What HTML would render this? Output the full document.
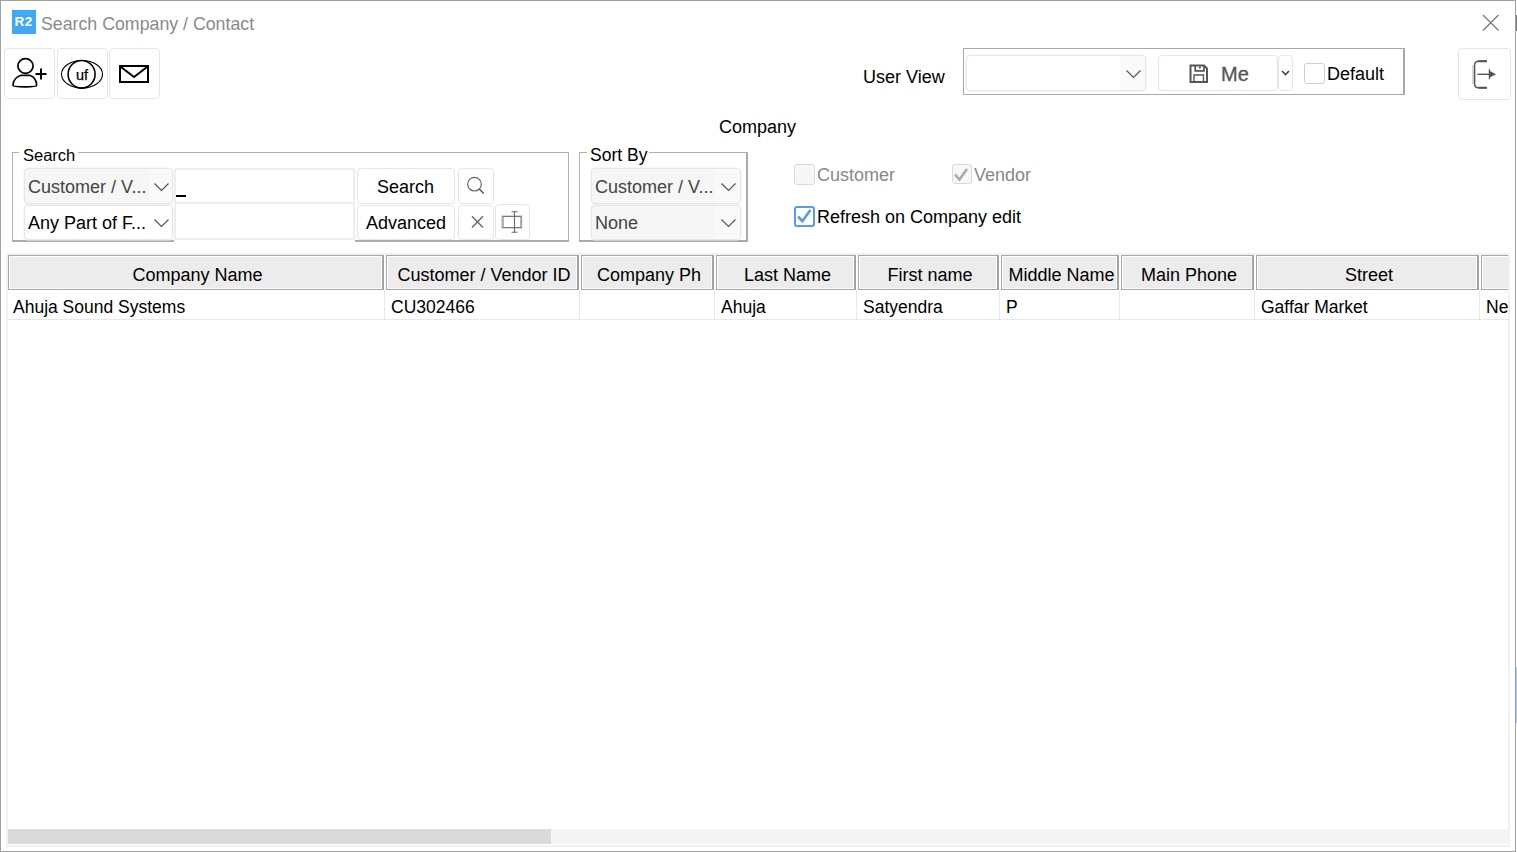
<!DOCTYPE html>
<html><head><meta charset="utf-8">
<style>
html,body{margin:0;padding:0;}
body{width:1517px;height:852px;position:relative;overflow:hidden;background:#fff;font-family:"Liberation Sans",sans-serif;color:#000;}
.a{position:absolute;box-sizing:border-box;}
.t{position:absolute;white-space:nowrap;line-height:18px;font-size:18px;}
.btn{position:absolute;box-sizing:border-box;border:1px solid #e6e6e6;border-radius:4px;background:#fff;}
.cmb{position:absolute;box-sizing:border-box;border:1px solid #e4e6e9;border-radius:4px;background:#f6f6f6;overflow:hidden;box-shadow:0 0 0 0.5px #eef0f2;}
.cmb .dd{position:absolute;top:0;bottom:0;right:0;width:23px;background:#f9f9f9;}
.hd{position:absolute;box-sizing:border-box;top:0;box-shadow:inset 1px 1px 0 #fff,inset -1px -1px 0 #fafafa;height:35px;background:#ececec;border:1px solid #a8a8a8;border-right:2px solid #a4a4a4;}
.hd span{position:absolute;left:2px;right:-2px;top:10px;text-align:center;font-size:18px;line-height:18px;white-space:nowrap;}
.rs{position:absolute;top:290px;height:30px;width:1px;background:#ececec;}
.rt{position:absolute;top:43px;font-size:17.5px;line-height:18px;white-space:nowrap;}
</style></head><body>
<!-- window frame -->
<div class="a" style="left:0;top:0;width:1516px;height:852px;border:1px solid #a0a0a0;"></div>

<div class="a" style="left:1516px;top:15px;width:1px;height:16px;background:#777;"></div>
<div class="a" style="left:1516px;top:667px;width:1px;height:56px;background:#a8c4ea;"></div>
<!-- title -->
<div class="a" style="left:12px;top:10px;width:24px;height:24px;background:#3fa9f5;"></div>
<div class="t" style="left:14.5px;top:15.3px;font-size:13.5px;line-height:13.5px;color:#fff;font-weight:bold;letter-spacing:0.6px;">R2</div>
<div class="t" style="left:41px;top:15px;font-size:17.75px;color:#8a8a8a;">Search Company / Contact</div>


<!-- close X -->
<svg class="a" style="left:1480px;top:12px" width="22" height="22" viewBox="0 0 22 22"><path d="M3 3 L18.5 18.5 M18.5 3 L3 18.5" stroke="#777" stroke-width="1.2" fill="none"/></svg>

<!-- toolbar buttons -->
<div class="btn" style="left:4px;top:48px;width:51px;height:51px;"></div>
<div class="btn" style="left:57px;top:48px;width:51px;height:51px;"></div>
<div class="btn" style="left:109px;top:48px;width:51px;height:51px;"></div>
<!-- person+ icon -->
<svg class="a" style="left:4px;top:48px" width="51" height="51" viewBox="0 0 51 51">
 <ellipse cx="21.5" cy="18" rx="7.6" ry="7.3" stroke="#000" stroke-width="1.7" fill="none"/>
 <path d="M17 27.3 C13 28.5 9 32 9 37.5 C9 38.5 12 38.8 21 38.8 C30 38.8 32.6 38.5 32.6 37.5 C32.6 32 29.5 28.5 25.5 27.3 Z" stroke="#000" stroke-width="1.7" fill="none"/>
 <path d="M31.5 26 H42.5 M37 20.5 V31.5" stroke="#000" stroke-width="2" fill="none"/>
</svg>
<!-- uf icon -->
<svg class="a" style="left:57px;top:48px" width="51" height="51" viewBox="0 0 51 51">
 <ellipse cx="25" cy="26.3" rx="20.5" ry="13.8" stroke="#000" stroke-width="1.1" fill="none"/>
 <ellipse cx="24.6" cy="26.3" rx="13.5" ry="13.8" stroke="#000" stroke-width="1.6" fill="none"/>
 <text x="19" y="31.7" font-family="Liberation Sans" font-size="14.5" fill="#000" stroke="#000" stroke-width="0.25">uf</text>
</svg>
<!-- envelope -->
<svg class="a" style="left:109px;top:48px" width="51" height="51" viewBox="0 0 51 51">
 <rect x="11" y="18" width="28" height="16" stroke="#000" stroke-width="2" fill="none"/>
 <path d="M12 19 L25 29 L38 19" stroke="#000" stroke-width="2" fill="none"/>
</svg>

<!-- user view -->
<div class="t" style="left:863px;top:68px;">User View</div>
<div class="a" style="left:963px;top:48px;width:442px;height:47px;border:1px solid #a8a8a8;border-right:2px solid #a8a8a8;"></div>
<div class="cmb" style="left:966px;top:55px;width:180px;height:36px;background:#fff;"><div class="dd" style="width:25px;background:#fafafa;"></div></div>
<svg class="a" style="left:1126px;top:69.5px" width="15" height="9" viewBox="0 0 15 9"><path d="M0.5 0.5 L7.5 7.5 L14.5 0.5" stroke="#555" stroke-width="1.2" fill="none"/></svg>
<div class="btn" style="left:1158px;top:55px;width:120px;height:36px;"></div>
<div class="btn" style="left:1278px;top:55px;width:15px;height:36px;"></div>
<svg class="a" style="left:1281px;top:70px" width="9" height="6" viewBox="0 0 9 6"><path d="M1 1 L4.5 4.5 L8 1" stroke="#444" stroke-width="1.6" fill="none"/></svg>
<!-- floppy -->
<svg class="a" style="left:1189px;top:64px" width="20" height="20" viewBox="0 0 20 20">
 <path d="M1.5 1.5 H15 L18 4.5 V18 H1.5 Z" stroke="#555" stroke-width="2" fill="none"/>
 <path d="M6.2 2 V6.8 H15 V2" stroke="#555" stroke-width="1.7" fill="none"/>
 <rect x="10" y="2.5" width="1.8" height="2" fill="#555"/>
 <path d="M5 17.5 V11 H14.5 V17.5" stroke="#555" stroke-width="1.4" fill="none"/>
</svg>
<div class="t" style="left:1221px;top:64px;font-size:20px;line-height:20px;color:#555;-webkit-text-stroke:0.3px #555;">Me</div>
<div class="a" style="left:1304px;top:63px;width:21px;height:21px;border:1px solid #cfcfcf;border-radius:3px;background:#fff;"></div>
<div class="t" style="left:1327px;top:65px;">Default</div>

<!-- exit button -->
<div class="btn" style="left:1458px;top:48px;width:53px;height:52px;"></div>
<svg class="a" style="left:1458px;top:48px" width="53" height="52" viewBox="0 0 53 52">
 <path d="M29 13.2 H20.5 Q16.8 13.2 16.6 17 V36 Q16.8 39.8 20.5 39.8 H29" stroke="#555" stroke-width="1.5" fill="none"/>
 <path d="M20.5 13.2 H29 M20.5 39.8 H29" stroke="#555" stroke-width="1.9" fill="none"/>
 <path d="M15 17 V36" stroke="#bbb" stroke-width="1.2" fill="none"/>
 <path d="M19.5 26.3 H31" stroke="#555" stroke-width="1.4" fill="none"/>
 <path d="M31.4 21.3 V31.3" stroke="#555" stroke-width="1.2" fill="none"/>
 <path d="M31 22.5 L38 26.3 L31 30 Z" fill="#555"/>
</svg>

<!-- Company label -->
<div class="t" style="left:719px;top:118px;">Company</div>


<!-- Search groupbox -->
<div class="a" style="left:12px;top:152px;width:557px;height:90px;border:1px solid #b0b0b0;border-bottom:2px solid #acacac;"></div>
<div class="a" style="left:19px;top:145px;width:59px;height:14px;background:#fff;"></div>
<div class="t" style="left:23px;top:147px;font-size:16.5px;line-height:16.5px;">Search</div>

<div class="cmb" style="left:24px;top:168px;width:149px;height:36px;"><div class="dd"></div></div>
<div class="t" style="left:28px;top:178px;color:#444;">Customer / V...</div>
<svg class="a" style="left:154px;top:183px" width="15" height="9" viewBox="0 0 15 9"><path d="M0.5 0.5 L7.5 7.5 L14.5 0.5" stroke="#555" stroke-width="1.2" fill="none"/></svg>
<div class="cmb" style="left:24px;top:205px;width:149px;height:35px;background:#fff;"><div class="dd" style="background:#fff"></div></div>
<div class="t" style="left:28px;top:214px;">Any Part of F...</div>
<svg class="a" style="left:154px;top:219px" width="15" height="9" viewBox="0 0 15 9"><path d="M0.5 0.5 L7.5 7.5 L14.5 0.5" stroke="#555" stroke-width="1.2" fill="none"/></svg>

<div class="a" style="left:174px;top:168px;width:181px;height:36px;border:2px solid #eceef0;background:#fff;"></div>
<div class="a" style="left:176px;top:195px;width:10px;height:2px;background:#000;"></div>
<div class="a" style="left:174px;top:204px;width:181px;height:38px;background:#fff;"></div>
<div class="a" style="left:174px;top:203px;width:181px;height:37px;border:2px solid #eceef0;border-top-width:1px;background:#fff;"></div>

<div class="btn" style="left:357px;top:168px;width:98px;height:36px;"></div>
<div class="t" style="left:377px;top:178px;">Search</div>
<div class="btn" style="left:357px;top:205px;width:98px;height:35px;"></div>
<div class="t" style="left:366px;top:214px;">Advanced</div>

<div class="btn" style="left:458px;top:168px;width:36px;height:36px;"></div>
<svg class="a" style="left:458px;top:168px" width="36" height="36" viewBox="0 0 36 36">
 <circle cx="16.5" cy="16.2" r="6.8" stroke="#666" stroke-width="1.2" fill="none"/>
 <path d="M21.3 21 L25.8 25.5" stroke="#555" stroke-width="1.5" fill="none"/>
</svg>
<div class="btn" style="left:458px;top:205px;width:36px;height:35px;"></div>
<svg class="a" style="left:458px;top:205px" width="36" height="35" viewBox="0 0 36 35">
 <path d="M14 11.3 L25 22.5 M25 11.3 L14 22.5" stroke="#666" stroke-width="1.4" fill="none"/>
</svg>
<div class="btn" style="left:495px;top:204px;width:35px;height:36px;"></div>
<svg class="a" style="left:495px;top:204px" width="35" height="36" viewBox="0 0 35 36">
 <rect x="7" y="12" width="19.5" height="12" stroke="#ccc" stroke-width="1.6" fill="none"/>
 <rect x="8" y="12.5" width="18" height="11" stroke="#777" stroke-width="1" fill="none"/>
 <path d="M19.5 7.5 V28.5 M16.5 7.8 H22.5 M16.5 28.2 H22.5" stroke="#666" stroke-width="1.1" fill="none"/>
</svg>

<!-- Sort By groupbox -->
<div class="a" style="left:579px;top:152px;width:169px;height:90px;border:1px solid #b0b0b0;border-right:2px solid #aaa;border-bottom:2px solid #aaa;"></div>
<div class="a" style="left:587px;top:145px;width:62px;height:14px;background:#fff;"></div>
<div class="t" style="left:590px;top:147px;font-size:17.5px;line-height:17.5px;">Sort By</div>
<div class="cmb" style="left:591px;top:168px;width:150px;height:36px;"><div class="dd" style="width:25px"></div></div>
<div class="t" style="left:595px;top:178px;color:#444;">Customer / V...</div>
<svg class="a" style="left:721px;top:183px" width="15" height="9" viewBox="0 0 15 9"><path d="M0.5 0.5 L7.5 7.5 L14.5 0.5" stroke="#555" stroke-width="1.2" fill="none"/></svg>
<div class="cmb" style="left:591px;top:205px;width:150px;height:35px;"><div class="dd" style="width:25px"></div></div>
<div class="t" style="left:595px;top:214px;color:#444;">None</div>
<svg class="a" style="left:721px;top:219px" width="15" height="9" viewBox="0 0 15 9"><path d="M0.5 0.5 L7.5 7.5 L14.5 0.5" stroke="#555" stroke-width="1.2" fill="none"/></svg>

<!-- checkboxes -->
<div class="a" style="left:794px;top:164px;width:21px;height:21px;border:1.5px solid #dadada;border-radius:3px;background:#f7f7f7;"></div>
<div class="t" style="left:817px;top:166px;color:#888;">Customer</div>
<div class="a" style="left:952px;top:164px;width:20px;height:20px;border:1.5px solid #dadada;border-radius:3px;background:#f7f7f7;"></div>
<svg class="a" style="left:951px;top:164px" width="21" height="21" viewBox="0 0 21 21"><path d="M4 10.5 L8.5 15.5 L16 5" stroke="#aaa" stroke-width="2.6" fill="none"/></svg>
<div class="t" style="left:974px;top:166px;color:#888;">Vendor</div>
<div class="a" style="left:794px;top:206px;width:21px;height:21px;border:2px solid #5a9be6;border-radius:3px;background:#fff;"></div>
<svg class="a" style="left:794px;top:206px" width="21" height="21" viewBox="0 0 21 21"><path d="M4.1 10.5 L8.4 15.2 L16.4 4" stroke="#5a9be6" stroke-width="2.7" fill="none"/></svg>
<div class="t" style="left:817px;top:208px;">Refresh on Company edit</div>


<!-- grid -->
<div class="a" style="left:6px;top:253px;width:1504px;height:594px;border:2px solid #eff1f4;"></div>
<div class="a" style="left:8px;top:255px;width:1500px;height:589px;overflow:hidden;">
<div class="hd" style="left:0px;width:376px;"><span>Company Name</span></div>
<div class="hd" style="left:378px;width:193px;"><span>Customer / Vendor ID</span></div>
<div class="hd" style="left:573px;width:133px;"><span>Company Ph</span></div>
<div class="hd" style="left:708px;width:140px;"><span>Last Name</span></div>
<div class="hd" style="left:850px;width:141px;"><span>First name</span></div>
<div class="hd" style="left:993px;width:118px;"><span>Middle Name</span></div>
<div class="hd" style="left:1113px;width:133px;"><span>Main Phone</span></div>
<div class="hd" style="left:1248px;width:223px;"><span>Street</span></div>
<div class="hd" style="left:1473px;width:120px;"><span></span></div>
<div class="a" style="left:0;top:64px;width:1500px;height:1px;background:#e8e8e8;"></div>
<div class="a" style="left:376px;top:35px;width:1px;height:30px;background:#e8e8e8;"></div>
<div class="a" style="left:571px;top:35px;width:1px;height:30px;background:#e8e8e8;"></div>
<div class="a" style="left:706px;top:35px;width:1px;height:30px;background:#e8e8e8;"></div>
<div class="a" style="left:848px;top:35px;width:1px;height:30px;background:#e8e8e8;"></div>
<div class="a" style="left:991px;top:35px;width:1px;height:30px;background:#e8e8e8;"></div>
<div class="a" style="left:1111px;top:35px;width:1px;height:30px;background:#e8e8e8;"></div>
<div class="a" style="left:1246px;top:35px;width:1px;height:30px;background:#e8e8e8;"></div>
<div class="a" style="left:1471px;top:35px;width:1px;height:30px;background:#e8e8e8;"></div>
<div class="rt" style="left:5px;">Ahuja Sound Systems</div>
<div class="rt" style="left:383px;">CU302466</div>
<div class="rt" style="left:713px;">Ahuja</div>
<div class="rt" style="left:855px;">Satyendra</div>
<div class="rt" style="left:998px;">P</div>
<div class="rt" style="left:1253px;">Gaffar Market</div>
<div class="rt" style="left:1478px;">New Delhi</div>
<div class="a" style="left:0;top:574px;width:1500px;height:15px;background:#f4f4f4;"></div>
<div class="a" style="left:0;top:574px;width:543px;height:15px;background:#dadada;"></div>
</div>

</body></html>
